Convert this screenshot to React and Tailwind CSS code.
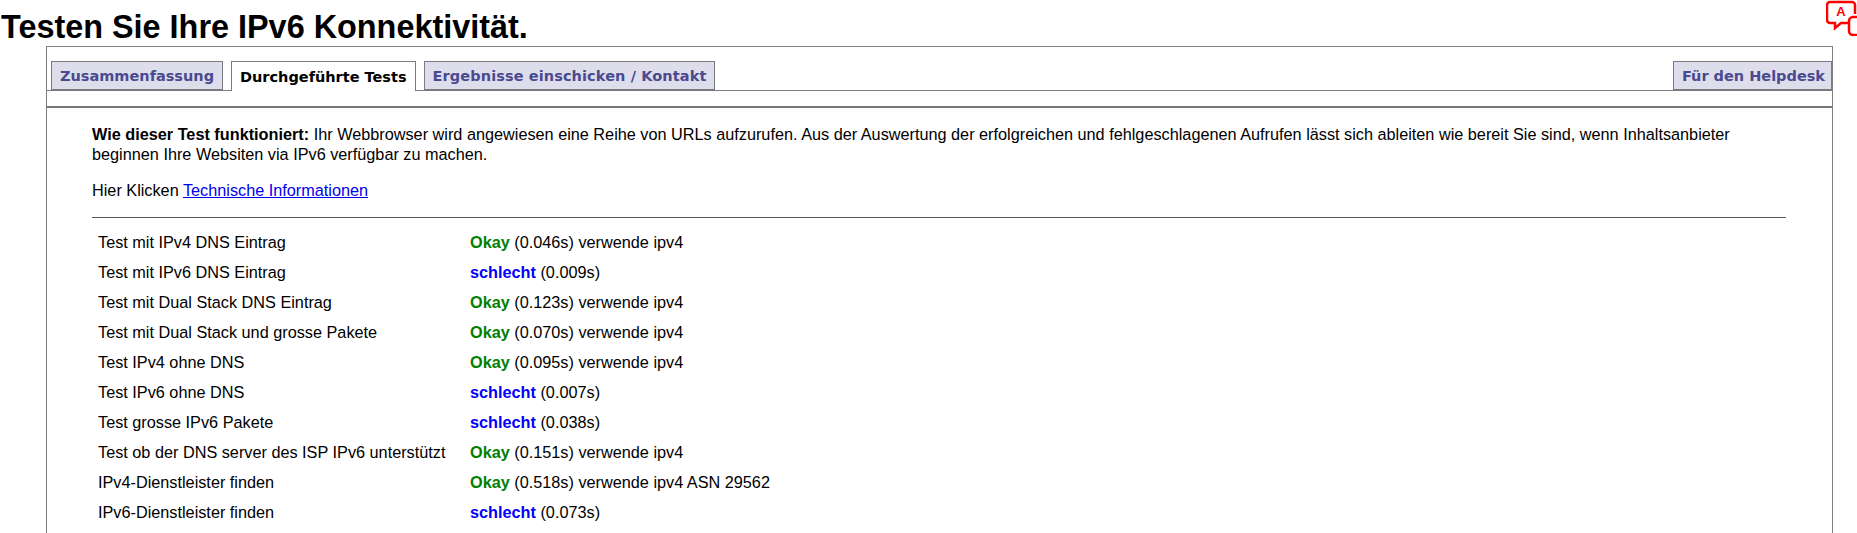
const rows = [
  ["Test mit IPv4 DNS Eintrag", true, "(0.046s) verwende ipv4"],
  ["Test mit IPv6 DNS Eintrag", false, "(0.009s)"],
  ["Test mit Dual Stack DNS Eintrag", true, "(0.123s) verwende ipv4"],
  ["Test mit Dual Stack und grosse Pakete", true, "(0.070s) verwende ipv4"],
  ["Test IPv4 ohne DNS", true, "(0.095s) verwende ipv4"],
  ["Test IPv6 ohne DNS", false, "(0.007s)"],
  ["Test grosse IPv6 Pakete", false, "(0.038s)"],
  ["Test ob der DNS server des ISP IPv6 unterstützt", true, "(0.151s) verwende ipv4"],
  ["IPv4-Dienstleister finden", true, "(0.518s) verwende ipv4 ASN 29562"],
  ["IPv6-Dienstleister finden", false, "(0.073s)"],
];

function Tab({ label, active, className = "px-2" }) {
  if (active) {
    return (
      <div className={`h-[30px] -mb-px bg-white border border-b-0 border-[#7a7a80] font-['DejaVu_Sans'] font-bold text-[14.5px] leading-[30px] text-black ${className}`}>
        {label}
      </div>
    );
  }
  return (
    <div className={`h-[29px] bg-[#deddec] border border-[#7a7a80] font-['DejaVu_Sans'] font-bold text-[14.5px] leading-[29px] text-[#4a4a8e] ${className}`}>
      {label}
    </div>
  );
}

export default function App() {
  return (
    <div className="relative h-[533px] overflow-hidden bg-white font-['Liberation_Sans',sans-serif] text-black">
      <h1 className="h-[46px] pl-[1px] text-[32.4px] leading-[37px] pt-[9px] font-bold">
        Testen Sie Ihre IPv6 Konnektivität.
      </h1>

      <svg className="absolute top-0 left-[1826px] w-[31px] h-[36px]" viewBox="0 0 31 36" fill="none" stroke="#ff0000" strokeWidth="2.5">
        <path d="M29 14V5a3 3 0 0 0-3-3H4a3 3 0 0 0-3 3v15a3 3 0 0 0 3 3h5v5l6-5h7" />
        <path d="M31 17h-4a4 4 0 0 0-4 4v10a4 4 0 0 0 4 4h4" />
        <text x="15" y="16" textAnchor="middle" fontSize="13" fontWeight="700" fill="#ff0000" stroke="none">A</text>
      </svg>

      <div className="ml-[46px] w-[1787px] h-[487px] border border-b-0 border-[#808080]">
        <div className="flex h-[44px] items-end justify-between pl-1 pr-0 border-b border-[#7a7a80]">
          <div className="flex items-end gap-2">
            <Tab label="Zusammenfassung" />
            <Tab label="Durchgeführte Tests" active />
            <Tab label="Ergebnisse einschicken / Kontakt" className="px-2 tracking-[0.1px]" />
          </div>
          <Tab label="Für den Helpdesk" className="pl-2 pr-[6px]" />
        </div>

        <div className="mt-[15px] border-t-2 border-[#777777] pt-[16px] pl-[45px] pr-[46px] text-[16.25px] leading-[20px]">
          <p>
            <b>Wie dieser Test funktioniert:</b> Ihr Webbrowser wird angewiesen eine Reihe von URLs aufzurufen. Aus der Auswertung der erfolgreichen und fehlgeschlagenen Aufrufen lässt sich ableiten wie bereit Sie sind, wenn Inhaltsanbieter beginnen Ihre Websiten via IPv6 verfügbar zu machen.
          </p>
          <p className="mt-[16px]">
            Hier Klicken <a href="#" className="text-[#0000ee] underline">Technische Informationen</a>
          </p>
          <hr className="mt-[17px] border-t border-[#555]" />
          <div className="mt-[9px] pl-[6px]">
            {rows.map(([name, ok, result]) => (
              <div key={name} className="flex h-[30px] items-center">
                <div className="w-[372px]">{name}</div>
                <div>
                  {ok ? (
                    <b className="text-[#008000]">Okay</b>
                  ) : (
                    <b className="text-[#0000ff]">schlecht</b>
                  )}{" "}
                  {result}
                </div>
              </div>
            ))}
          </div>
        </div>
      </div>
    </div>
  );
}
